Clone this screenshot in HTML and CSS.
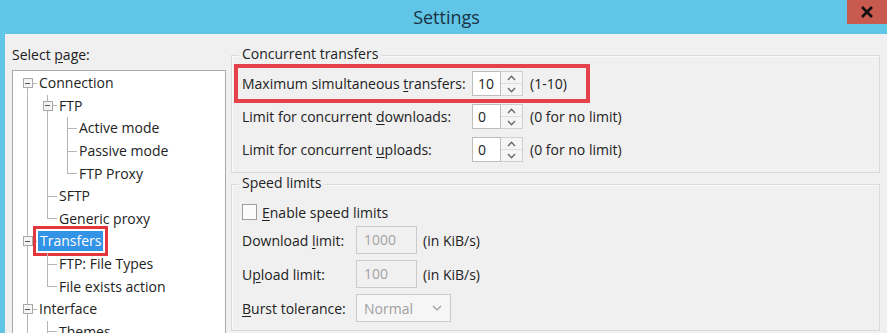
FILE: index.html
```html
<!DOCTYPE html>
<html>
<head>
<meta charset="utf-8">
<title>Settings</title>
<link rel="stylesheet" href="styles.css">
</head>
<body>
<div class="window">
  <header class="titlebar">
    <span class="title">Settings</span>
    <button class="close" aria-label="Close">
      <svg width="14" height="12" viewBox="0 0 14 12"><path d="M2 1 L12 11 M12 1 L2 11" stroke="#111" stroke-width="2.6" fill="none"/></svg>
    </button>
  </header>
  <div class="content">
    <aside class="pages">
      <div class="pages-label">Select <u>p</u>age:</div>
      <div class="tree">
        <div class="row"><span class="c down"><i class="exp"></i></span><span class="t">Connection</span></div>
        <div class="row"><span class="c v"></span><span class="c full"><i class="exp"></i></span><span class="t">FTP</span></div>
        <div class="row"><span class="c v"></span><span class="c v"></span><span class="c tee"></span><span class="t">Active mode</span></div>
        <div class="row"><span class="c v"></span><span class="c v"></span><span class="c tee"></span><span class="t">Passive mode</span></div>
        <div class="row"><span class="c v"></span><span class="c v"></span><span class="c elb"></span><span class="t">FTP Proxy</span></div>
        <div class="row"><span class="c v"></span><span class="c tee"></span><span class="t">SFTP</span></div>
        <div class="row"><span class="c v"></span><span class="c elb"></span><span class="t">Generic proxy</span></div>
        <div class="row"><span class="c full"><i class="exp"></i></span><span class="t sel">Transfers</span></div>
        <div class="row"><span class="c v"></span><span class="c tee"></span><span class="t">FTP: File Types</span></div>
        <div class="row"><span class="c v"></span><span class="c elb"></span><span class="t">File exists action</span></div>
        <div class="row"><span class="c full"><i class="exp"></i></span><span class="t">Interface</span></div>
        <div class="row"><span class="c v"></span><span class="c tee"></span><span class="t">Themes</span></div>
      </div>
    </aside>
    <main class="panel">
      <section class="group g1">
        <div class="group-title">Concurrent transfers</div>
        <div class="g-rows">
          <div class="g-row marked">
            <span class="lbl1">Maximum simultaneous <u>t</u>ransfers:</span>
            <span class="spin"><span class="spin-input">10</span><span class="spin-btns"><span class="sb"><svg width="9" height="6" viewBox="0 0 9 6"><path d="M1 5 L4.5 1.2 L8 5" stroke="#666" stroke-width="1.3" fill="none"/></svg></span><span class="sb"><svg width="9" height="6" viewBox="0 0 9 6"><path d="M1 1 L4.5 4.8 L8 1" stroke="#666" stroke-width="1.3" fill="none"/></svg></span></span></span>
            <span class="range">(1-10)</span>
          </div>
          <div class="g-row">
            <span class="lbl1">Limit for concurrent <u>d</u>ownloads:</span>
            <span class="spin"><span class="spin-input">0</span><span class="spin-btns"><span class="sb"><svg width="9" height="6" viewBox="0 0 9 6"><path d="M1 5 L4.5 1.2 L8 5" stroke="#666" stroke-width="1.3" fill="none"/></svg></span><span class="sb"><svg width="9" height="6" viewBox="0 0 9 6"><path d="M1 1 L4.5 4.8 L8 1" stroke="#666" stroke-width="1.3" fill="none"/></svg></span></span></span>
            <span class="range">(0 for no limit)</span>
          </div>
          <div class="g-row">
            <span class="lbl1">Limit for concurrent <u>u</u>ploads:</span>
            <span class="spin"><span class="spin-input">0</span><span class="spin-btns"><span class="sb"><svg width="9" height="6" viewBox="0 0 9 6"><path d="M1 5 L4.5 1.2 L8 5" stroke="#666" stroke-width="1.3" fill="none"/></svg></span><span class="sb"><svg width="9" height="6" viewBox="0 0 9 6"><path d="M1 1 L4.5 4.8 L8 1" stroke="#666" stroke-width="1.3" fill="none"/></svg></span></span></span>
            <span class="range">(0 for no limit)</span>
          </div>
        </div>
      </section>
      <section class="group g2">
        <div class="group-title">Speed limits</div>
        <div class="s-rows">
          <div class="s-row check-row"><span class="checkbox"></span><span><u>E</u>nable speed limits</span></div>
          <div class="s-row"><span class="lbl2">Download <u>l</u>imit:</span><span class="dis">1000</span><span class="unit">(in KiB/s)</span></div>
          <div class="s-row"><span class="lbl2">U<u>p</u>load limit:</span><span class="dis">100</span><span class="unit">(in KiB/s)</span></div>
          <div class="s-row"><span class="lbl2"><u>B</u>urst tolerance:</span><span class="select"><span>Normal</span><svg width="10" height="6" viewBox="0 0 10 6"><path d="M1 1 L5 5 L9 1" stroke="#9a9a9a" stroke-width="1.2" fill="none"/></svg></span></div>
        </div>
      </section>
    </main>
  </div>
</div>
</body>
</html>
```

FILE: styles.css
```css
* { box-sizing: border-box; }

body {
  margin: 0;
  background: #60c5e7;
  font-family: "Open Sans", "Noto Sans", sans-serif;
  font-size: 14px;
  color: #222;
  overflow: hidden;
}

u { text-decoration-thickness: 1px; text-underline-offset: 2px; }

.window {
  width: 887px;
  height: 333px;
  display: flex;
  flex-direction: column;
  overflow: hidden;
}

.titlebar {
  height: 34px;
  flex: none;
  display: grid;
  grid-template-columns: 1fr auto 1fr;
  background: #60c5e7;
}

.title {
  grid-column: 2;
  font-size: 18px;
  line-height: 34px;
  color: #1a3242;
  padding-left: 6px;
}

.close {
  grid-column: 3;
  justify-self: end;
  align-self: start;
  width: 40px;
  height: 24px;
  background: #c85a50;
  border: 0;
  padding: 0;
  display: flex;
  align-items: center;
  justify-content: center;
}

.content {
  flex: 1;
  min-height: 0;
  display: flex;
  margin-left: 5px;
  background: #f0f0f0;
  padding-top: 11px;
}

.pages {
  width: 221px;
  flex: none;
  padding-left: 7px;
  display: flex;
  flex-direction: column;
}

.pages-label {
  height: 20px;
  line-height: 20px;
  margin-bottom: 5px;
}

.tree {
  flex: 1;
  background: #fff;
  border: 1px solid #a9a9a9;
  border-bottom: 0;
  padding: 1px 0 0 4px;
  overflow: hidden;
}

.row {
  height: 22.6px;
  display: flex;
  align-items: center;
  white-space: nowrap;
}

.c {
  width: 20px;
  height: 100%;
  flex: none;
  display: flex;
  align-items: center;
  justify-content: center;
}

.v {
  background: linear-gradient(#b5b5b5, #b5b5b5) 10px 0 / 1px 100% no-repeat;
}

.tee {
  background:
    linear-gradient(#b5b5b5, #b5b5b5) 10px 0 / 1px 100% no-repeat,
    linear-gradient(#b5b5b5, #b5b5b5) 10px 50% / 10px 1px no-repeat;
}

.elb {
  background:
    linear-gradient(#b5b5b5, #b5b5b5) 10px 0 / 1px 50% no-repeat,
    linear-gradient(#b5b5b5, #b5b5b5) 10px 50% / 10px 1px no-repeat;
}

.down {
  background:
    linear-gradient(#b5b5b5, #b5b5b5) 10px 100% / 1px 50% no-repeat,
    linear-gradient(#b5b5b5, #b5b5b5) 10px 50% / 10px 1px no-repeat;
}

.full {
  background:
    linear-gradient(#b5b5b5, #b5b5b5) 10px 0 / 1px 100% no-repeat,
    linear-gradient(#b5b5b5, #b5b5b5) 10px 50% / 10px 1px no-repeat;
}

.exp {
  width: 10px;
  height: 10px;
  border: 1px solid #a8a8a8;
  background: linear-gradient(#555, #555) center / 5px 1px no-repeat, #f4f4f4;
  margin-left: 1px;
}

.t {
  margin-left: 2px;
  line-height: 20px;
}

.t.sel {
  background: #3393e6;
  color: #fff;
  padding: 0 2px;
  margin-left: 1px;
  outline: 3px solid #e3363d;
  outline-offset: 2px;
}

.panel {
  flex: 1;
  padding: 10px 7px 0 5px;
  display: flex;
  flex-direction: column;
}

.group {
  border: 1px solid #dadada;
  box-shadow: inset 1px 1px 0 #fafafa;
  padding: 0 0 0 10px;
}

.group-title {
  width: max-content;
  line-height: 20px;
  margin: -12px 0 0 -3px;
  padding: 0 3px;
  background: #f0f0f0;
}

.g1 { height: 118px; }

.g-rows {
  padding-top: 3px;
}

.g-row {
  height: 33px;
  display: flex;
  align-items: center;
}

.g-row.marked {
  width: 350px;
  margin-left: -5px;
  padding-left: 5px;
  outline: 4px solid #e5414a;
  outline-offset: -1px;
}

.lbl1 { width: 230px; flex: none; }

.spin {
  display: flex;
  height: 25px;
}

.spin-input {
  width: 29px;
  height: 25px;
  border: 1px solid #bdbdbd;
  background: #fff;
  padding-left: 5px;
  line-height: 23px;
}

.spin-btns {
  width: 22px;
  display: flex;
  flex-direction: column;
  border: 1px solid #cfcfcf;
  border-left: 0;
  background: #f5f5f5;
}

.sb {
  flex: 1;
  display: flex;
  align-items: center;
  justify-content: center;
}

.sb + .sb { border-top: 1px solid #dedede; }

.range { margin-left: 7px; }

.g2 {
  margin-top: 11px;
  height: 147px;
}

.s-rows {
  display: flex;
  flex-direction: column;
  gap: 6px;
  padding-top: 5px;
}

.s-row {
  height: 28px;
  display: flex;
  align-items: center;
}

.check-row { margin-bottom: -6px; }

.checkbox {
  width: 15px;
  height: 16px;
  border: 1px solid #9d9d9d;
  background: #fbfbfb;
  margin-right: 5px;
}

.lbl2 { width: 114px; flex: none; }

.dis {
  width: 61px;
  height: 28px;
  border: 1px solid #cbcbcb;
  background: #f0f0f0;
  color: #a2a2a2;
  padding-left: 7px;
  line-height: 26px;
}

.unit { margin-left: 6px; }

.select {
  width: 95px;
  height: 28px;
  border: 1px solid #c9c9c9;
  background: #f6f6f6;
  color: #a0a0a0;
  padding: 0 8px 0 7px;
  display: flex;
  align-items: center;
  justify-content: space-between;
}
```
